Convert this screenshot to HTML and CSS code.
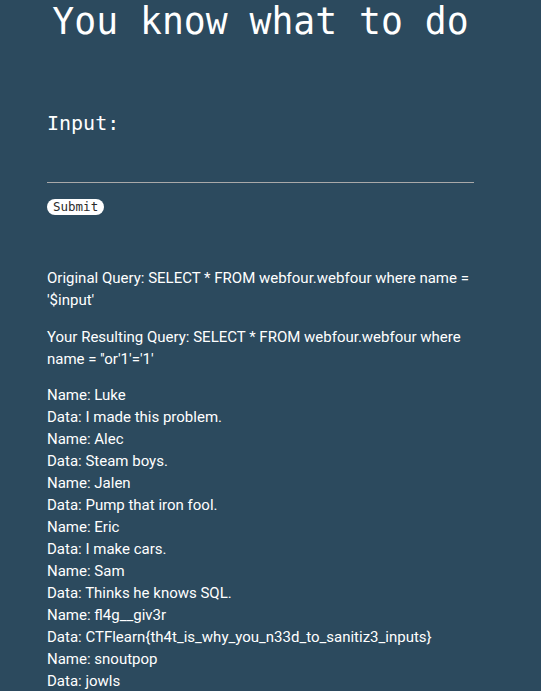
FILE: index.html
```html
<!DOCTYPE html>
<html>
<head>
<meta charset="utf-8">
<link rel="stylesheet" href="styles.css">
</head>
<body>
<div class="wrap">
  <h1 class="title">You know what to do</h1>
  <form class="form">
    <label class="label" for="q">Input:</label>
    <input class="field" id="q" type="text">
    <button class="submit" type="button">Submit</button>
  </form>
  <p class="query query-first">Original Query: SELECT * FROM webfour.webfour where name = '$input'</p>
  <p class="query">Your Resulting Query: SELECT * FROM webfour.webfour where name = ''or'1'='1'</p>
  <div class="rows">
    <div>Name: Luke</div>
    <div>Data: I made this problem.</div>
    <div>Name: Alec</div>
    <div>Data: Steam boys.</div>
    <div>Name: Jalen</div>
    <div>Data: Pump that iron fool.</div>
    <div>Name: Eric</div>
    <div>Data: I make cars.</div>
    <div>Name: Sam</div>
    <div>Data: Thinks he knows SQL.</div>
    <div>Name: fl4g__giv3r</div>
    <div>Data: CTFlearn{th4t_is_why_you_n33d_to_sanitiz3_inputs}</div>
    <div>Name: snoutpop</div>
    <div>Data: jowls</div>
  </div>
</div>
</body>
</html>
```
FILE: styles.css
```css
html, body {
  margin: 0;
  padding: 0;
  background: #2c4a5e;
}
body {
  color: #ffffff;
  font-family: Roboto, "Noto Sans", sans-serif;
  font-size: 15px;
  line-height: 22px;
}
.wrap {
  width: 427px;
  margin-left: 47px;
}
.title {
  margin: 0;
  padding-top: 1px;
  text-align: center;
  font-family: "DejaVu Sans Mono", monospace;
  font-weight: normal;
  font-size: 36.4px;
  line-height: 42px;
}
.form {
  display: flex;
  flex-direction: column;
  align-items: flex-start;
  margin-top: 68px;
}
.label {
  font-family: "DejaVu Sans Mono", monospace;
  font-size: 20px;
  line-height: 24px;
}
.field {
  box-sizing: border-box;
  width: 100%;
  height: 48px;
  margin: 0;
  padding: 0;
  background: transparent;
  border: none;
  border-bottom: 1px solid #a9a9a9;
  color: #fff;
  outline: none;
}
.submit {
  margin-top: 16px;
  height: 16px;
  padding: 0 6px;
  border: none;
  border-radius: 8px;
  background: #ffffff;
  color: #2b2b2b;
  font-family: "DejaVu Sans Mono", monospace;
  font-size: 12.5px;
  line-height: 16px;
}
.query {
  margin: 0 0 14px;
}
.query-first {
  margin-top: 52px;
  margin-bottom: 15px;
}
```
